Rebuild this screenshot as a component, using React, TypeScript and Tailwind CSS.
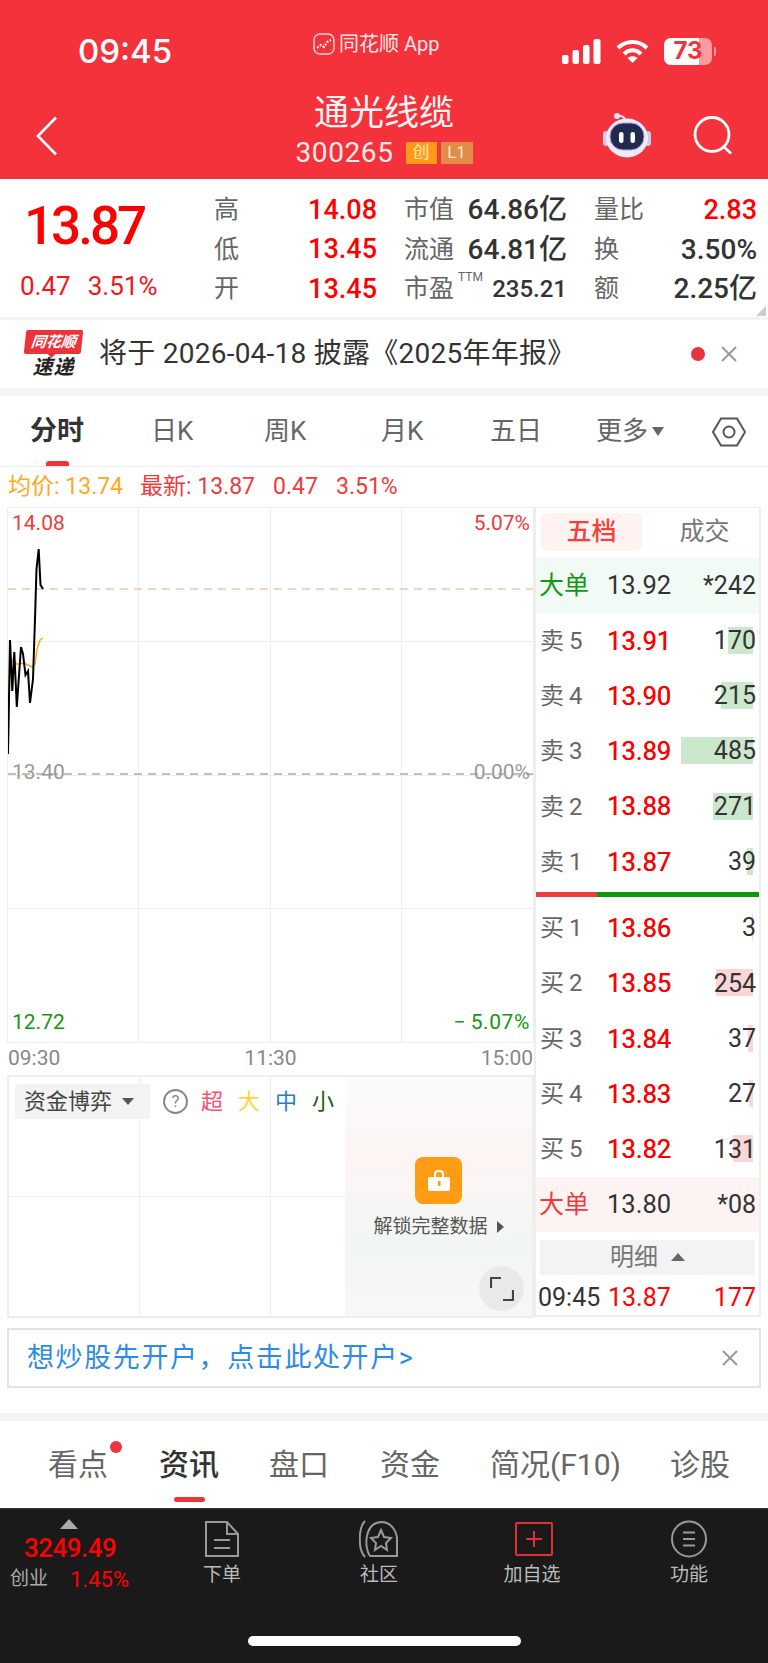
import React from 'react';

const font = "[font-family:Roboto,'Noto_Sans_CJK_SC',sans-serif]";

const quoteRows = [
  [
    { label: '高', value: '14.08', color: 'text-[#ff0000] text-[27px]' },
    { label: '市值', value: '64.86亿', color: 'text-[#333333] text-[28px]' },
    { label: '量比', value: '2.83', color: 'text-[#ff0000] text-[27px]' },
  ],
  [
    { label: '低', value: '13.45', color: 'text-[#ff0000] text-[27px]' },
    { label: '流通', value: '64.81亿', color: 'text-[#333333] text-[28px]' },
    { label: '换', value: '3.50%', color: 'text-[#333333] text-[28px]' },
  ],
  [
    { label: '开', value: '13.45', color: 'text-[#ff0000] text-[27px]' },
    { label: '市盈', value: '235.21', color: 'text-[#333333] text-[24px]', ttm: true },
    { label: '额', value: '2.25亿', color: 'text-[#333333] text-[28px]' },
  ],
];

const sellRows = [
  { label: '卖', n: 5, price: '13.91', vol: '170', bar: 'w-[25px]' },
  { label: '卖', n: 4, price: '13.90', vol: '215', bar: 'w-[32px]' },
  { label: '卖', n: 3, price: '13.89', vol: '485', bar: 'w-[72px]' },
  { label: '卖', n: 2, price: '13.88', vol: '271', bar: 'w-[40px]' },
  { label: '卖', n: 1, price: '13.87', vol: '39', bar: 'w-[6px]' },
];

const buyRows = [
  { label: '买', n: 1, price: '13.86', vol: '3', bar: 'w-[1px]' },
  { label: '买', n: 2, price: '13.85', vol: '254', bar: 'w-[37px]' },
  { label: '买', n: 3, price: '13.84', vol: '37', bar: 'w-[5px]' },
  { label: '买', n: 4, price: '13.83', vol: '27', bar: 'w-[4px]' },
  { label: '买', n: 5, price: '13.82', vol: '131', bar: 'w-[20px]' },
];

const BookRow = ({ row, barColor }: { row: { label: string; n: number; price: string; vol: string; bar: string }; barColor: string }) => (
  <div className="h-[55.3px] flex items-center pl-[4px] pr-[3px] relative">
    <span className="w-[67px] flex items-center gap-[5px] text-[24px] text-[#666666]">
      {row.label}
      <span>{row.n}</span>
    </span>
    <span className="text-[25.5px] text-[#ff0000] [text-shadow:0.3px_0_0_#ff0000]">{row.price}</span>
    <div className="ml-auto relative h-[28px] flex items-center justify-end">
      <div className={`absolute right-[3px] top-0 h-[27px] ${row.bar} ${barColor}`} />
      <span className="relative text-[25px] text-[#333333]">{row.vol}</span>
    </div>
  </div>
);

const BigOrder = ({ labelColor, bg, price, vol }: { labelColor: string; bg: string; price: string; vol: string }) => (
  <div className={`h-[55px] shrink-0 flex items-center pl-[3px] pr-[3px] ${bg}`}>
    <span className={`w-[68px] text-[25px] ${labelColor}`}>大单</span>
    <span className="text-[25.5px] text-[#333333]">{price}</span>
    <span className="ml-auto text-[25px] text-[#333333]">{vol}</span>
  </div>
);

const Robot = () => (
  <svg width="48" height="46" viewBox="0 0 48 46">
    <path d="M22 9 C22 4 17 3 15 5" fill="none" stroke="#e6e4f5" strokeWidth="2" />
    <circle cx="14" cy="4" r="3" fill="#e6e4f5" />
    <rect x="0" y="19" width="6" height="15" rx="3" fill="#c9cbe8" />
    <rect x="42" y="19" width="6" height="15" rx="3" fill="#c9cbe8" />
    <ellipse cx="24" cy="26" rx="21" ry="19.5" fill="#eeeaf8" />
    <rect x="7" y="11" width="34" height="27" rx="13" fill="#1f2b4d" stroke="#b79cf0" strokeWidth="1" />
    <rect x="16" y="20" width="4.5" height="11" rx="2.2" fill="#ffffff" />
    <rect x="27.5" y="20" width="4.5" height="11" rx="2.2" fill="#ffffff" />
  </svg>
);

const GridCols = () => (
  <div className="absolute inset-0 grid grid-cols-4">
    <div className="border-r border-[#eeeeee]" />
    <div className="border-r border-[#eeeeee]" />
    <div className="border-r border-[#eeeeee]" />
    <div />
  </div>
);

export default function App() {
  return (
    <div className={`w-[768px] h-[1663px] bg-white overflow-hidden flex flex-col ${font}`}>
      {/* red header */}
      <div className="h-[179px] bg-[#f4323c] text-white shrink-0">
        <div className="h-[88px] flex items-center pl-[78px]">
          <span className="w-[235px] text-[33px] font-medium [font-family:Inter,sans-serif] mt-[15px]">09:45</span>
          <div className="w-[249px] flex items-center gap-[4px] text-[20px] text-[#ffe6e6]">
            <svg width="22" height="22" viewBox="0 0 22 22">
              <rect x="1" y="1" width="20" height="20" rx="6" fill="#f0343c" stroke="#ffd0d0" strokeWidth="1.5" />
              <path d="M4 15 L8 12 L11 14 L14 9 L18 7" fill="none" stroke="#ffffff" strokeWidth="2" strokeDasharray="2 1.5" />
            </svg>
            同花顺 App
          </div>
          <div className="flex items-center mt-[14px]">
            <svg width="39" height="25" viewBox="0 0 39 25" fill="#ffffff">
              <rect x="0" y="16" width="6.5" height="9" rx="2" />
              <rect x="10.5" y="11" width="6.5" height="14" rx="2" />
              <rect x="21" y="6" width="6.5" height="19" rx="2" />
              <rect x="31.5" y="0" width="7" height="25" rx="2" />
            </svg>
            <svg className="ml-[15px]" width="33" height="25" viewBox="0 0 33 25" fill="none" stroke="#ffffff" strokeWidth="4">
              <path d="M2 9 C10 1 23 1 31 9" />
              <path d="M8 15 C13 10 20 10 25 15" />
              <path d="M16.5 24 L11.5 19 C14 16.5 19 16.5 21.5 19 Z" fill="#ffffff" stroke="none" />
            </svg>
            <div className="ml-[15px] relative w-[48px] h-[27px] rounded-[7px] bg-[#fb9ba0] overflow-hidden flex items-center justify-center">
              <div className="absolute left-0 top-0 bottom-0 w-[35px] bg-white" />
              <span className="relative text-[24px] font-bold text-[#f4323c] [font-family:Inter,sans-serif]">73</span>
            </div>
            <div className="ml-[2px] w-[2px] h-[9px] rounded-r bg-[#fb9ba0]" />
          </div>
        </div>
        <div className="h-[91px] grid grid-cols-[1fr_auto_1fr]">
          <div className="pl-[36px] pt-[28px]">
            <svg width="22" height="40" viewBox="0 0 22 40" fill="none" stroke="#ffffff" strokeWidth="2.6">
              <path d="M20 1.5 L2 20 L20 38.5" />
            </svg>
          </div>
          <div className="flex flex-col items-center">
            <span className="text-[35px] leading-[44px] mt-[4px] text-[#fff4f4]">通光线缆</span>
            <div className="flex items-center mt-[2px]">
              <span className="text-[28px] leading-[30px] w-[110px] tracking-[0.6px] text-[#ffeaea]">300265</span>
              <span className="w-[31px] h-[22px] bg-[#ff9a18] text-[#ffe9b8] text-[17px] flex items-center justify-center">创</span>
              <span className="ml-[4px] w-[32px] h-[22px] bg-[#e28c48] text-[#ffe9d2] text-[17px] flex items-center justify-center">L1</span>
            </div>
          </div>
          <div className="flex justify-end items-start pr-[35px] pt-[24px] gap-[42px]">
            <Robot />
            <svg className="mt-[4px]" width="40" height="39" viewBox="0 0 40 39" fill="none" stroke="#ffffff" strokeWidth="2.8">
              <circle cx="19" cy="18.5" r="17" />
              <path d="M31 31 L38 37.5" />
            </svg>
          </div>
        </div>
      </div>

      {/* quote summary */}
      <div className="h-[138px] shrink-0 flex relative">
        <div className="w-[200px] pl-[20px] pt-[15px]">
          <div className="pl-[4px] text-[53px] leading-[64px] font-medium tracking-[-3px] text-[#ff0000]">13.87</div>
          <div className="mt-[12px] flex gap-[17px] text-[26px] leading-[32px] text-[#f01818]">
            <span>0.47</span>
            <span>3.51%</span>
          </div>
        </div>
        <div className="ml-[14px] w-[543px] pt-[10px] flex flex-col">
          {quoteRows.map((row, i) => (
            <div key={i} className="h-[39.5px] grid grid-cols-3 gap-x-[27px]">
              {row.map((cell) => (
                <div key={cell.label} className="flex items-center justify-between">
                  <span className="flex text-[25px] text-[#666666]">
                    {cell.label}
                    {cell.ttm && <span className="ml-[4px] text-[12px] leading-[14px]">TTM</span>}
                  </span>
                  <span className={`font-medium ${cell.color}`}>{cell.value}</span>
                </div>
              ))}
            </div>
          ))}
        </div>
        <div className="absolute right-[2px] bottom-[1px] w-0 h-0 border-l-[10px] border-l-transparent border-b-[10px] border-b-[#cccccc]" />
      </div>
      <div className="h-[3px] bg-[#f4f4f4] shrink-0" />

      {/* notice */}
      <div className="h-[68px] shrink-0 flex items-center pl-[25px]">
        <div className="w-[57px] flex flex-col items-center">
          <div className="relative w-[57px] h-[24px] bg-[#e8343a] rounded-[2px] -skew-x-6 flex items-center justify-center text-white text-[15px] font-bold italic">
            同花顺
            <span className="absolute left-[24px] -bottom-[4px] w-0 h-0 border-x-[4px] border-x-transparent border-t-[4px] border-t-[#e8343a]" />
          </div>
          <div className="mt-[2px] text-[20px] leading-[22px] font-bold italic text-[#222222] tracking-[1px]">速递</div>
        </div>
        <span className="ml-[17px] text-[28px] text-[#333333] tracking-[0.25px]">将于 2026-04-18 披露《2025年年报》</span>
        <div className="ml-auto mr-[31px] flex items-center gap-[16px]">
          <div className="w-[14px] h-[14px] rounded-full bg-[#e8343a]" />
          <svg width="16" height="16" viewBox="0 0 16 16" stroke="#999999" strokeWidth="2">
            <path d="M1 1 L15 15 M15 1 L1 15" />
          </svg>
        </div>
      </div>
      <div className="h-[8px] bg-[#f4f4f4] shrink-0" />

      {/* period tabs */}
      <div className="h-[71px] shrink-0 border-b border-[#eeeeee] relative flex items-center text-[26px] text-[#666666]">
        <span className="absolute left-[30px] text-[27px] font-bold text-[#333333]">分时</span>
        <span className="absolute left-[46px] bottom-0 w-[23px] h-[5px] rounded-t-[3px] bg-[#f4323c]" />
        <span className="absolute left-[151px]">日K</span>
        <span className="absolute left-[264px]">周K</span>
        <span className="absolute left-[381px]">月K</span>
        <span className="absolute left-[490px]">五日</span>
        <span className="absolute left-[596px] flex items-center gap-[4px]">
          更多
          <span className="w-0 h-0 border-x-[6px] border-x-transparent border-t-[9px] border-t-[#666666]" />
        </span>
        <svg className="absolute left-[712px] top-[21px]" width="34" height="30" viewBox="0 0 34 30" fill="none" stroke="#555555" strokeWidth="2">
          <path d="M9 1.5 H25 L33 15 L25 28.5 H9 L1 15 Z" />
          <circle cx="17" cy="15" r="5.5" />
        </svg>
      </div>

      {/* price legend */}
      <div className="h-[40px] shrink-0 pl-[8px] flex items-center text-[23px] pt-[1px]">
        <span className="w-[132px] text-[#ffa81e]">均价: 13.74</span>
        <span className="w-[133px] text-[#ee3b3b]">最新: 13.87</span>
        <span className="w-[63px] text-[#ee3b3b]">0.47</span>
        <span className="text-[#ee3b3b]">3.51%</span>
      </div>

      {/* chart + order book */}
      <div className="flex items-start pl-[7px] h-[810px] shrink-0">
        <div className="w-[527px] shrink-0">
          <div className="h-[536px] relative border border-[#eeeeee]">
            <GridCols />
            <div className="absolute inset-0 grid grid-rows-4">
              <div className="border-b border-[#eeeeee]" />
              <div />
              <div className="border-t border-b border-[#eeeeee]" />
              <div />
            </div>
            <svg className="absolute left-0 top-0" width="525" height="300" viewBox="8 509 525 300" fill="none">
              <line x1="8" y1="590" x2="533" y2="590" stroke="#eec9a5" strokeWidth="1.5" strokeDasharray="8 6" />
              <line x1="8" y1="775" x2="533" y2="775" stroke="#aaaaaa" strokeWidth="1.5" strokeDasharray="8 6" />
              <polyline points="8,755 10,670 13,660 16,665 20,665 24,664 28,666 32,668 35,665 37,650 40,641 43,639" stroke="#ffa81e" strokeWidth="1.5" />
              <polyline points="8,755 10,641 12.3,692 14.3,653 16.8,708 21,648 23,655 25.5,676 28,672 30,704 33,680 35,620 36.5,570 38.7,550 40.5,586 43,590" stroke="#000000" strokeWidth="2" />
            </svg>
            <span className="absolute left-[4px] top-0 text-[21px] text-[#ee3b3b]">14.08</span>
            <span className="absolute right-[3px] top-0 text-[21px] text-[#ee3b3b]">5.07%</span>
            <span className="absolute left-[4px] top-[249px] text-[21px] text-[#999999]">13.40</span>
            <span className="absolute right-[3px] top-[249px] text-[21px] text-[#999999]">0.00%</span>
            <span className="absolute left-[4px] bottom-[4px] text-[21px] text-[#119911]">12.72</span>
            <span className="absolute right-[3px] bottom-[4px] text-[21px] tracking-[0.6px] text-[#119911]">−&#8201;5.07%</span>
          </div>
          <div className="h-[32px] flex items-center justify-between px-[1px] text-[21px] text-[#888888]">
            <span>09:30</span>
            <span>11:30</span>
            <span>15:00</span>
          </div>
          <div className="h-[243px] relative border-2 border-[#eeeeee] overflow-hidden">
            <GridCols />
            <div className="absolute left-0 right-0 top-[119px] border-t border-[#eeeeee]" />
            <div className="relative flex items-center pt-[7px] pl-[6px]">
              <div className="w-[135px] h-[35px] rounded-[3px] bg-[#f3f3f3] flex items-center pl-[9px] text-[22px] text-[#444444]">
                资金博弈
                <span className="ml-[10px] w-0 h-0 border-x-[6px] border-x-transparent border-t-[7px] border-t-[#555555]" />
              </div>
              <div className="ml-[13px] w-[25px] h-[25px] rounded-full border-2 border-[#888888] flex items-center justify-center text-[17px] text-[#888888]">?</div>
              <span className="ml-[13px] text-[22px] text-[#ff4d6d]">超</span>
              <span className="ml-[15px] text-[22px] text-[#ffd53a]">大</span>
              <span className="ml-[15px] text-[22px] text-[#1e7ed0]">中</span>
              <span className="ml-[15px] text-[22px] text-[#1d5c0f]">小</span>
            </div>
            <div className="absolute right-0 top-0 bottom-0 w-[187px] bg-[linear-gradient(180deg,#fbfbfb_0%,#fcf5f4_35%,#f1f6f3_72%,#f7f7f7_100%)] flex flex-col items-center pt-[80px]">
              <div className="w-[47px] h-[47px] rounded-[8px] bg-[#ff9c14] flex items-center justify-center">
                <svg width="24" height="24" viewBox="0 0 24 24">
                  <path d="M8 8 V5 C8 1 16 1 16 5 V8" fill="none" stroke="#ffffff" strokeWidth="2" />
                  <rect x="1" y="8" width="22" height="14" rx="2" fill="#ffffff" />
                  <rect x="11" y="12" width="2.5" height="5" fill="#ff9c14" />
                </svg>
              </div>
              <div className="mt-[9px] flex items-center gap-[9px] text-[19px] text-[#555555]">
                解锁完整数据
                <span className="w-0 h-0 border-y-[6px] border-y-transparent border-l-[7px] border-l-[#555555]" />
              </div>
            </div>
            <div className="absolute right-[8px] bottom-[5px] w-[45px] h-[45px] rounded-full bg-[#e9e9e9] flex items-center justify-center">
              <svg width="24" height="24" viewBox="0 0 24 24" fill="none" stroke="#444444" strokeWidth="2.2">
                <path d="M1 11 V1 H11" />
                <path d="M23 13 V23 H13" />
              </svg>
            </div>
          </div>
        </div>

        <div className="w-[227px] h-[810px] border-x-2 border-[#eeeeee] flex flex-col">
          <div className="border-t border-[#eeeeee] h-[51px] pt-[5px] shrink-0 flex pl-[5px]">
            <div className="w-[101px] h-[38px] rounded-[5px] bg-[#fff3f2] flex items-center justify-center text-[25px] font-medium text-[#f4403c]">五档</div>
            <div className="flex-1 pl-[8px] h-[38px] flex items-center justify-center text-[25px] text-[#777777]">成交</div>
          </div>
          <BigOrder labelColor="text-[#119911]" bg="bg-[#f2faf5]" price="13.92" vol="*242" />
          {sellRows.map((row) => (
            <BookRow key={row.label + row.n} row={row} barColor="bg-[#cbe8cd]" />
          ))}
          <div className="h-[5px] mt-[3px] mb-[3px] shrink-0 flex">
            <div className="w-[61px] bg-[#ee3b3b]" />
            <div className="flex-1 bg-[#0a9a0a]" />
          </div>
          {buyRows.map((row) => (
            <BookRow key={row.label + row.n} row={row} barColor="bg-[#fbd5d7]" />
          ))}
          <BigOrder labelColor="text-[#ee3b3b]" bg="bg-[#fef3f3]" price="13.80" vol="*08" />
          <div className="mx-[4px] mt-[8px] h-[35px] shrink-0 bg-[#f3f3f3] flex items-center justify-center gap-[13px] text-[24px] text-[#777777]">
            明细
            <span className="w-0 h-0 border-x-[7px] border-x-transparent border-b-[8px] border-b-[#666666]" />
          </div>
          <div className="h-[42px] shrink-0 flex items-center pl-[2px] pr-[3px] pt-[5px] text-[25px] border-b-2 border-[#eeeeee]">
            <span className="w-[70px] text-[#333333]">09:45</span>
            <span className="text-[#ff0000]">13.87</span>
            <span className="ml-auto text-[#ff0000]">177</span>
          </div>
        </div>
      </div>

      {/* open account banner */}
      <div className="mx-[7px] mt-[11px] h-[60px] shrink-0 border-2 border-[#e4e4e4] flex items-center pl-[18px] pr-[21px]">
        <span className="text-[27px] tracking-[1.6px] text-[#2b8ce6]">想炒股先开户，点击此处开户&gt;</span>
        <svg className="ml-auto" width="16" height="16" viewBox="0 0 16 16" stroke="#999999" strokeWidth="2">
          <path d="M1 1 L15 15 M15 1 L1 15" />
        </svg>
      </div>

      <div className="h-[25px] shrink-0" />
      <div className="h-[8px] bg-[#f4f4f4] shrink-0" />

      {/* info tabs */}
      <div className="h-[87px] shrink-0 relative text-[30px] text-[#666666]">
        <span className="absolute left-[48px] top-[21px]">看点</span>
        <span className="absolute left-[110px] top-[20px] w-[12px] h-[12px] rounded-full bg-[#f4323c]" />
        <span className="absolute left-[159px] top-[21px] font-medium text-[#333333]">资讯</span>
        <span className="absolute left-[174px] bottom-[6px] w-[31px] h-[5px] rounded-[3px] bg-[#f4323c]" />
        <span className="absolute left-[269px] top-[21px]">盘口</span>
        <span className="absolute left-[380px] top-[21px]">资金</span>
        <span className="absolute left-[490px] top-[21px]">简况(F10)</span>
        <span className="absolute left-[670px] top-[21px]">诊股</span>
      </div>

      {/* bottom bar */}
      <div className="flex-1 bg-[#1a1a1a] border-t border-[#333333] relative">
        <div className="flex">
          <div className="w-[140px] pl-[10px] flex flex-col">
            <div className="mt-[10px] ml-[50px] w-0 h-0 border-x-[9px] border-x-transparent border-b-[10px] border-b-[#aaaaaa]" />
            <div className="ml-[14px] mt-[4px] text-[26px] leading-[30px] font-medium tracking-[-0.5px] text-[#ff0000]">3249.49</div>
            <div className="flex items-center">
              <span className="w-[60px] text-[19px] text-[#aaaaaa]">创业</span>
              <span className="text-[22px] text-[#ff0000]">1.45%</span>
            </div>
          </div>
          <div className="w-[164px] flex flex-col items-center pt-[11px]">
            <svg width="34" height="38" viewBox="0 0 34 38" fill="none" stroke="#999999" strokeWidth="2">
              <path d="M1 2 H22 L33 14 V36 H1 Z" />
              <path d="M22 2 V14 H33" />
              <path d="M9 20 H25 M9 28 H25" />
            </svg>
            <span className="mt-[3px] text-[19px] text-[#bbbbbb]">下单</span>
          </div>
          <div className="w-[150px] flex flex-col items-center pt-[11px]">
            <svg width="40" height="38" viewBox="0 0 40 38" fill="none" stroke="#999999" strokeWidth="2">
              <path d="M6 37 C-1 30 -1 8 6 1" />
              <path d="M11 36 C5 28 5 3 22 2 C33 2 38 12 38 20 V36 Z" />
              <path d="M22 10 L25 17 L32 18 L27 23 L28 30 L22 26 L16 30 L17 23 L12 18 L19 17 Z" />
            </svg>
            <span className="mt-[3px] text-[19px] text-[#bbbbbb]">社区</span>
          </div>
          <div className="w-[156px] flex flex-col items-center pt-[11px]">
            <div className="h-[38px] flex items-center pl-[3px]">
              <svg width="38" height="34" viewBox="0 0 38 34" fill="none" stroke="#e03030" strokeWidth="2">
                <rect x="1" y="1" width="36" height="32" rx="1" />
                <path d="M19 9 V25 M11 17 H27" />
              </svg>
            </div>
            <span className="mt-[3px] text-[19px] text-[#bbbbbb]">加自选</span>
          </div>
          <div className="w-[158px] flex flex-col items-center pt-[11px]">
            <svg width="36" height="38" viewBox="0 0 36 38" fill="none" stroke="#999999" strokeWidth="2">
              <ellipse cx="18" cy="19" rx="17" ry="17.5" />
              <path d="M12 12.5 H24 M12 19 H24 M12 25.5 H24" />
            </svg>
            <span className="mt-[3px] text-[19px] text-[#bbbbbb]">功能</span>
          </div>
        </div>
        <div className="absolute left-[248px] bottom-[17px] w-[273px] h-[10px] rounded-full bg-white" />
      </div>
    </div>
  );
}
